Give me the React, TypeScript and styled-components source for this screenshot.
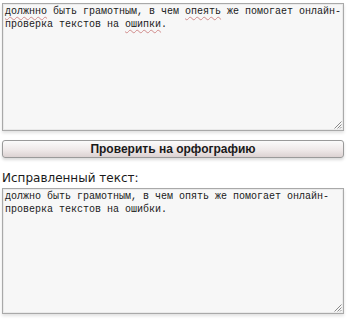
import * as React from 'react';
import styled, { createGlobalStyle } from 'styled-components';

const GlobalStyle = createGlobalStyle`
  html, body {
    margin: 0;
    padding: 0;
    background: #ffffff;
  }
`;

const Page = styled.div`
  width: 350px;
  height: 320px;
  padding: 3px 6px 0 2px;
  box-sizing: border-box;
  display: flex;
  flex-direction: column;
  overflow: hidden;
`;

const TextBox = styled.div<{ $height: number }>`
  position: relative;
  height: ${(p) => p.$height}px;
  box-sizing: border-box;
  border: 1px solid #a9a9a9;
  background: #f7f7f7;
  box-shadow: 0 2px 3px rgba(0, 0, 0, 0.12), inset 0 0 0 1px #eaeaea;
  padding: 1px 1px 3px 2px;
  font-family: 'Liberation Mono', 'Courier New', monospace;
  font-size: 10px;
  line-height: 13px;
  color: #1a1a1a;
  white-space: pre;
  overflow: hidden;
`;

const Misspelled = styled.span`
  text-decoration: underline wavy #d08a8a;
  text-decoration-thickness: 1px;
  text-underline-offset: 2px;
`;

const Grip = styled.svg`
  position: absolute;
  right: 1px;
  bottom: 1px;
  width: 9px;
  height: 9px;
`;

const CheckButton = styled.button`
  margin-top: 9px;
  height: 18px;
  width: 342px;
  border: 1px solid #9a9a9a;
  border-radius: 3px;
  background: linear-gradient(to bottom, #fbfbfb 0%, #efe9e9 55%, #dcd2d2 100%);
  box-shadow: 0 2px 3px rgba(0, 0, 0, 0.15);
  font-family: 'Liberation Sans', Arial, sans-serif;
  font-weight: bold;
  font-size: 12px;
  color: #1a1a1a;
  padding: 0;
  cursor: pointer;
`;

const Label = styled.div`
  margin-top: 13px;
  height: 17px;
  font-family: 'DejaVu Sans', Verdana, sans-serif;
  font-size: 12px;
  line-height: 15px;
  color: #1a1a1a;
`;

const ResizeGrip = () => (
  <Grip viewBox="0 0 9 9">
    <path d="M8.5 1.5 L1.5 8.5 M8.5 4.5 L4.5 8.5 M8.5 7 L7 8.5" stroke="#8a8a8a" strokeWidth="1" fill="none" />
  </Grip>
);

export default function App() {
  return (
    <Page>
      <GlobalStyle />
      <TextBox $height={128}>
        <Misspelled>должнно</Misspelled>
        {' быть грамотным, в чем '}
        <Misspelled>опеять</Misspelled>
        {' же помогает онлайн-\nпроверка текстов на '}
        <Misspelled>ошипки</Misspelled>
        {'.'}
        <ResizeGrip />
      </TextBox>
      <CheckButton>Проверить на орфографию</CheckButton>
      <Label>Исправленный текст:</Label>
      <TextBox $height={126}>
        {'должно быть грамотным, в чем опять же помогает онлайн-\nпроверка текстов на ошибки.'}
        <ResizeGrip />
      </TextBox>
    </Page>
  );
}
